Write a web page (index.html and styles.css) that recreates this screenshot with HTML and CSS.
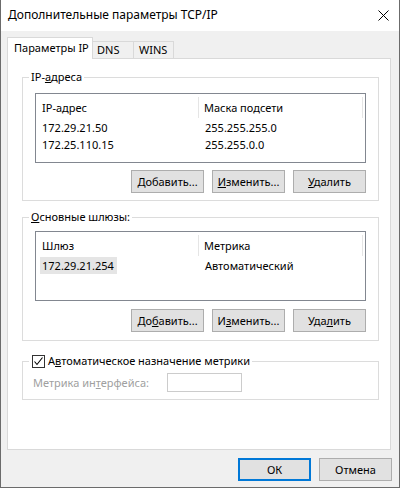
FILE: index.html
```html
<!DOCTYPE html>
<html lang="ru">
<head>
<meta charset="utf-8">
<title>Дополнительные параметры TCP/IP</title>
<link rel="stylesheet" href="styles.css">
</head>
<body>
<div class="window">
  <div class="titlebar">
    <span class="title">Дополнительные параметры TCP/IP</span>
    <svg class="close" width="11" height="11" viewBox="0 0 11 11"><path d="M0.5 0.5 L10.5 10.5 M10.5 0.5 L0.5 10.5" stroke="#000" stroke-width="1" fill="none"/></svg>
  </div>
  <div class="body">
    <div class="tabs">
      <div class="tab active">Параметры IP</div>
      <div class="tab dns">DNS</div>
      <div class="tab wins">WINS</div>
    </div>
    <div class="panel">
      <fieldset class="group g1">
        <legend>IP-<u>а</u>дреса</legend>
        <div class="listview">
          <div class="lv-head"><div class="c1">IP-адрес</div><div class="c2">Маска подсети</div><div class="c3"></div></div>
          <div class="lv-row"><div class="c1"><span>172.29.21.50</span></div><div class="c2">255.255.255.0</div></div>
          <div class="lv-row"><div class="c1"><span>172.25.110.15</span></div><div class="c2">255.255.0.0</div></div>
        </div>
        <div class="btnrow">
          <button class="btn"><u>Д</u>обавить...</button>
          <button class="btn"><u>И</u>зменить...</button>
          <button class="btn"><u>У</u>далить</button>
        </div>
      </fieldset>
      <fieldset class="group g2">
        <legend><u>О</u>сновные шлюзы:</legend>
        <div class="listview">
          <div class="lv-head"><div class="c1">Шлюз</div><div class="c2">Метрика</div><div class="c3"></div></div>
          <div class="lv-row"><div class="c1"><span class="sel">172.29.21.254</span></div><div class="c2">Автоматический</div></div>
        </div>
        <div class="btnrow">
          <button class="btn">До<u>б</u>авить...</button>
          <button class="btn">И<u>з</u>менить...</button>
          <button class="btn">Уда<u>л</u>ить</button>
        </div>
      </fieldset>
      <fieldset class="group g3">
        <legend><span class="check"><svg width="11" height="11" viewBox="0 0 11 11"><path d="M1.5 5.5 L4 8.5 L9.5 1.5" stroke="#000" stroke-width="1.1" fill="none"/></svg></span><span>А<u>в</u>томатическое назначение метрики</span></legend>
        <div class="metric">
          <span class="metric-label">Метрика ин<u>т</u>ерфейса:</span>
          <span class="metric-input"></span>
        </div>
      </fieldset>
    </div>
    <div class="footer">
      <button class="btn default">ОК</button>
      <button class="btn">Отмена</button>
    </div>
  </div>
</div>
</body>
</html>
```
FILE: styles.css
```css
* { box-sizing: border-box; }
html, body { margin: 0; padding: 0; }
body {
  font-family: "Noto Sans", "Open Sans", sans-serif;
  font-size: 11px;
  color: #000;
  background: #f0f0f0;
}
.window {
  width: 400px;
  height: 488px;
  border: 1px solid #6b6b6b;
  border-top: none;
  background: #f0f0f0;
  display: flex;
  flex-direction: column;
}
.titlebar {
  height: 31px;
  background: #fff;
  display: flex;
  align-items: center;
  justify-content: space-between;
  padding: 0 10px 1px 7px;
}
.title { font-size: 12px; line-height: 16px; white-space: nowrap; }
.close { display: block; margin-top: 1px; }
.body {
  flex: 1;
  padding: 6px 7px 0 6px;
  display: flex;
  flex-direction: column;
}
.tabs {
  display: flex;
  align-items: flex-end;
  height: 21px;
}
.tab {
  border: 1px solid #d9d9d9;
  border-bottom: none;
  background: #f0f0f0;
  height: 17px;
  line-height: 16px;
  padding-left: 4px;
  white-space: nowrap;
}
.tab.active {
  position: relative;
  z-index: 1;
  width: 86px;
  height: 22px;
  margin-bottom: -1px;
  background: #fff;
  padding-left: 6px;
  line-height: 20px;
}
.tab.dns { width: 42px; margin-left: -1px; }
.tab.wins { width: 41px; margin-left: -1px; padding-left: 5px; }
.panel {
  width: 384px;
  height: 392px;
  background: #fff;
  border: 1px solid #d9d9d9;
  padding: 10px 11px 0 14px;
}
.group {
  margin: 0;
  border: 1px solid #dcdcdc;
  padding: 0 12px 7px 12px;
  min-width: 0;
}
.group legend {
  padding: 0 2px;
  margin-left: -6px;
  line-height: 16px;
  white-space: nowrap;
}
.g2 { margin-top: 8px; padding-bottom: 8px; }
.g3 { margin-top: 12px; padding-bottom: 7px; }
.listview {
  margin-top: 8px;
  height: 70px;
  border: 1px solid #828790;
  background: #fff;
}
.g2 .listview { margin-top: 6px; }
.lv-head, .lv-row { display: flex; white-space: nowrap; }
.lv-head { height: 25px; align-items: center; }
.lv-head .c1 { width: 163px; height: 21px; line-height: 21px; padding-left: 6px; border-right: 1px solid #e5e5e5; margin-top: 2px; }
.lv-head .c2 { width: 164px; height: 21px; line-height: 21px; padding-left: 5px; border-right: 1px solid #e5e5e5; margin-top: 2px; }
.lv-row { height: 17px; line-height: 17px; }
.lv-row .c1 { width: 163px; padding-left: 4px; }
.lv-row .c1 span { padding: 0 3px 0 2px; display: inline-block; }
.lv-row .c1 span.sel { background: #e5e5e5; }
.lv-row .c2 { padding-left: 6px; }
.btnrow {
  display: flex;
  justify-content: flex-end;
  gap: 8px;
  margin-top: 7px;
}
.g2 .btnrow { margin-top: 8px; }
.btn {
  font-family: inherit;
  font-size: 11px;
  color: #000;
  width: 73px;
  height: 23px;
  padding: 0;
  margin: 0;
  background: #e1e1e1;
  border: 1px solid #adadad;
  line-height: 20px;
  white-space: nowrap;
}
.btn.default { border: 2px solid #0078d7; }
.g3 legend { display: flex; align-items: center; padding-left: 3px; }
.check {
  width: 13px;
  height: 13px;
  border: 1px solid #333;
  background: #fff;
  display: flex;
  align-items: center;
  justify-content: center;
  margin-right: 3px;
}
.check svg { display: block; }
.metric {
  display: flex;
  align-items: center;
  margin-top: 4px;
  margin-left: -2px;
}
.metric-label { color: #a0a0a0; width: 134px; white-space: nowrap; }
.metric-input {
  width: 75px;
  height: 19px;
  border: 1px solid #cccccc;
  background: #fff;
}
.footer {
  display: flex;
  justify-content: flex-end;
  gap: 8px;
  margin-top: 8px;
}
```
